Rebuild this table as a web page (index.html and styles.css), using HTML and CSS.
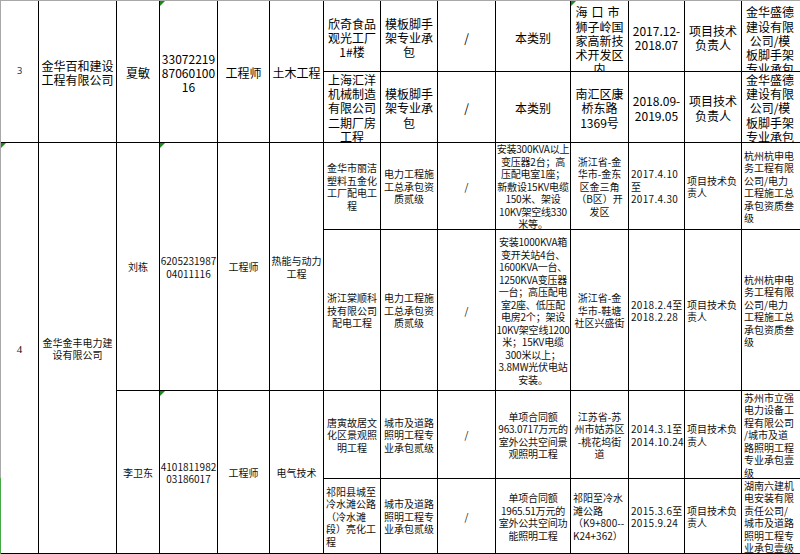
FILE: index.html
```html
<!DOCTYPE html>
<html lang="zh-CN">
<head>
<meta charset="utf-8">
<title>项目负责人业绩表</title>
<link rel="stylesheet" href="styles.css">
</head>
<body>
<div class="sheet">
  <!-- 序号 3 -->
  <div class="cell s2 g3 num"><p>3</p></div>
  <div class="cell s2 g3 p"><p>金华百和建设<br>工程有限公司</p></div>
  <div class="cell s2 g3 p"><p>夏敏</p></div>
  <div class="cell s2 g3 p flag"><p>33072219<br>87060100<br>16</p></div>
  <div class="cell s2 g3 p"><p>工程师</p></div>
  <div class="cell s2 g3 p"><p>土木工程</p></div>
  <div class="cell g3 r1"><p>欣奇食品<br>观光工厂<br>1#楼</p></div>
  <div class="cell g3 r1"><p>模板脚手<br>架专业承<br>包</p></div>
  <div class="cell g3 r1"><p>/</p></div>
  <div class="cell g3 r1"><p>本类别</p></div>
  <div class="cell g3 r1 over flag"><p><span class="spread">海口市</span><br>狮子岭国<br>家高新技<br>术开发区<br>内</p></div>
  <div class="cell g3 r1"><p>2017.12-<br>2018.07</p></div>
  <div class="cell g3 r1"><p>项目技术<br>负责人</p></div>
  <div class="cell g3 r1 over end"><p>金华盛德<br>建设有限<br>公司/模<br>板脚手架<br>专业承包</p></div>

  <div class="cell g3 r2"><p>上海汇洋<br>机械制造<br>有限公司<br>二期厂房<br>工程</p></div>
  <div class="cell g3 r2"><p>模板脚手<br>架专业承<br>包</p></div>
  <div class="cell g3 r2"><p>/</p></div>
  <div class="cell g3 r2"><p>本类别</p></div>
  <div class="cell g3 r2"><p>南汇区康<br>桥东路<br>1369号</p></div>
  <div class="cell g3 r2"><p>2018.09-<br>2019.05</p></div>
  <div class="cell g3 r2"><p>项目技术<br>负责人</p></div>
  <div class="cell g3 r2 end"><p>金华盛德<br>建设有限<br>公司/模<br>板脚手架<br>专业承包</p></div>

  <!-- 序号 4 -->
  <div class="cell s4 g4 num4 flag"><p>4</p></div>
  <div class="cell s4 g4"><p>金华金丰电力建<br>设有限公司</p></div>
  <div class="cell s2 g4"><p>刘栋</p></div>
  <div class="cell s2 g4 flag"><p>6205231987<br>04011116</p></div>
  <div class="cell s2 g4"><p>工程师</p></div>
  <div class="cell s2 g4"><p>热能与动力<br>工程</p></div>

  <div class="cell g4"><p>金华市丽洁<br>塑料五金化<br>工厂配电工<br>程</p></div>
  <div class="cell g4"><p>电力工程施<br>工总承包资<br>质贰级</p></div>
  <div class="cell g4"><p>/</p></div>
  <div class="cell g4 tight"><p>安装300KVA以上<br>变压器2台；高<br>压配电室1座；<br>新敷设15KV电缆<br>150米、架设<br>10KV架空线330<br>米等。</p></div>
  <div class="cell g4"><p>浙江省-金<br>华市-金东<br>区金三角<br>（B区）开<br>发区</p></div>
  <div class="cell g4 left date"><p>2017.4.10<br>至<br>2017.4.30</p></div>
  <div class="cell g4 left"><p>项目技术负<br>责人</p></div>
  <div class="cell g4 left end"><p>杭州杭申电<br>务工程有限<br>公司/电力<br>工程施工总<br>承包资质叁<br>级</p></div>

  <div class="cell g4"><p>浙江棠顺科<br>技有限公司<br>配电工程</p></div>
  <div class="cell g4"><p>电力工程施<br>工总承包资<br>质贰级</p></div>
  <div class="cell g4"><p>/</p></div>
  <div class="cell g4 tight"><p>安装1000KVA箱<br>变开关站4台、<br>1600KVA一台、<br>1250KVA变压器<br>一台；高压配电<br>室2座、低压配<br>电房2个；架设<br>10KV架空线1200<br>米；15KV电缆<br>300米以上；<br>3.8MW光伏电站<br>安装。</p></div>
  <div class="cell g4"><p>浙江省-金<br>华市-鞋塘<br>社区兴盛街</p></div>
  <div class="cell g4 left date"><p>2018.2.4至<br>2018.2.28</p></div>
  <div class="cell g4 left"><p>项目技术负<br>责人</p></div>
  <div class="cell g4 left end"><p>杭州杭申电<br>务工程有限<br>公司/电力<br>工程施工总<br>承包资质叁<br>级</p></div>

  <div class="cell s2 g4"><p>李卫东</p></div>
  <div class="cell s2 g4 flag"><p>4101811982<br>03186017</p></div>
  <div class="cell s2 g4"><p>工程师</p></div>
  <div class="cell s2 g4"><p>电气技术</p></div>

  <div class="cell g4"><p>唐寅故居文<br>化区景观照<br>明工程</p></div>
  <div class="cell g4"><p>城市及道路<br>照明工程专<br>业承包贰级</p></div>
  <div class="cell g4"><p>/</p></div>
  <div class="cell g4 tight"><p>单项合同额<br>963.0717万元的<br>室外公共空间景<br>观照明工程</p></div>
  <div class="cell g4"><p>江苏省-苏<br>州市姑苏区<br>-桃花坞街<br>道</p></div>
  <div class="cell g4 left date"><p>2014.3.1至<br>2014.10.24</p></div>
  <div class="cell g4 left"><p>项目技术负<br>责人</p></div>
  <div class="cell g4 left end"><p>苏州市立强<br>电力设备工<br>程有限公司<br>/城市及道<br>路照明工程<br>专业承包壹<br>级</p></div>

  <div class="cell g4 left"><p>祁阳县城至<br>冷水滩公路<br>（冷水滩<br>段）亮化工<br>程</p></div>
  <div class="cell g4"><p>城市及道路<br>照明工程专<br>业承包贰级</p></div>
  <div class="cell g4"><p>/</p></div>
  <div class="cell g4 tight"><p>单项合同额<br>1965.51万元的<br>室外公共空间功<br>能照明工程</p></div>
  <div class="cell g4 left"><p>祁阳至冷水<br>滩公路<br>（K9+800--<br>K24+362）</p></div>
  <div class="cell g4 left date"><p>2015.3.6至<br>2015.9.24</p></div>
  <div class="cell g4 left"><p>项目技术负<br>责人</p></div>
  <div class="cell g4 left end"><p>湖南六建机<br>电安装有限<br>责任公司/<br>城市及道路<br>照明工程专<br>业承包壹级</p></div>
</div>
</body>
</html>
```

FILE: styles.css
```css
html, body {
  margin: 0;
  padding: 0;
  background: #fff;
  overflow: hidden;
}

body {
  font-family: "Noto Sans CJK SC", "Noto Sans", sans-serif;
  color: #000;
}

.sheet {
  display: grid;
  grid-template-columns: 38px 78px 43px 58px 52px 54px 57px 57px 58px 75px 58px 56px 57px 60px;
  grid-template-rows: 71px 71px 87px 161px 88px 75px;
  width: max-content;
  padding-left: 1px;
  border-top: 1px solid #a8a8a8;
  background: linear-gradient(to bottom, #a8a8a8 477px, #45a845 477px);
}

.cell {
  position: relative;
  box-sizing: border-box;
  display: flex;
  align-items: center;
  justify-content: center;
  overflow: hidden;
  min-width: 0;
  min-height: 0;
  background: #fff;
  border-right: 1px solid #000;
  border-bottom: 1px solid #000;
}

.cell p {
  margin: 0;
  white-space: nowrap;
  text-align: center;
}

.s2 { grid-row: span 2; }
.s4 { grid-row: span 4; }

/* group 3: larger text */
.g3 {
  font-size: 12px;
  line-height: 14.3px;
}
.g3.p { padding-top: 3px; }
.g3.r1 { padding-top: 4px; }
.g3.r1.over { padding-top: 10px; }
.g3.r2 { padding-top: 3px; }

.num p {
  font-family: "DejaVu Sans", sans-serif;
  font-size: 9px;
  color: #2b3a6b;
}

.spread { letter-spacing: 4px; }

/* group 4: smaller text */
.g4 {
  font-size: 10px;
  line-height: 12.5px;
  color: #111;
  padding-top: 2px;
}

.num4 p {
  font-family: "Liberation Serif", serif;
  font-size: 11px;
}

.tight p { letter-spacing: -0.2px; }

.left {
  justify-content: flex-start;
  padding-left: 2px;
}
.left p { text-align: left; }

.date p { letter-spacing: 0.3px; }

.end { padding-right: 3px; }

.flag::before {
  content: "";
  position: absolute;
  top: 0;
  left: 0;
  border-top: 5px solid #1d8a1d;
  border-right: 5px solid transparent;
}
```
